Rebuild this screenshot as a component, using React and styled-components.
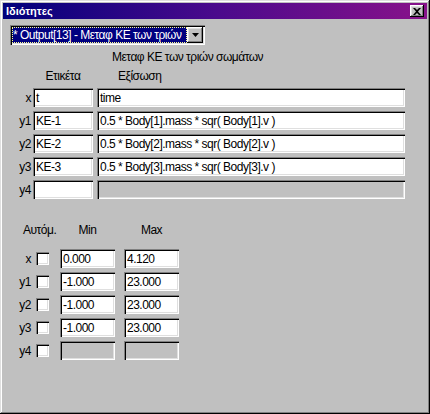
import React from 'react';
import styled, { createGlobalStyle } from 'styled-components';

const GlobalStyle = createGlobalStyle`
  html, body {
    margin: 0;
    padding: 0;
    background: #c0c0c0;
  }

  body {
    font-family: "Liberation Sans", Arial, sans-serif;
    font-size: 12px;
    letter-spacing: -0.5px;
    color: #000;
  }
`;

const sunken = 'inset 1px 1px #808080, inset 2px 2px #000, inset -1px -1px #fff, inset -2px -2px #dfdfdf';
const raised = 'inset -1px -1px #000, inset 1px 1px #fff, inset -2px -2px #808080, inset 2px 2px #dfdfdf';

const StyledWindow = styled.div`
  box-sizing: border-box;
  width: 430px;
  height: 414px;
  padding: 3px;
  display: flex;
  flex-direction: column;
  background: #c0c0c0;
  box-shadow: inset -1px -1px #000, inset 1px 1px #dfdfdf, inset -2px -2px #808080, inset 2px 2px #fff;
`;

const StyledTitleBar = styled.div`
  height: 16px;
  display: flex;
  align-items: center;
  justify-content: space-between;
  padding: 0 3px;
  background: linear-gradient(90deg, #00007b 0%, #4a0a8c 50%, #88128a 100%);
`;

const StyledTitle = styled.span`
  font-size: 11px;
  font-weight: bold;
  letter-spacing: 0;
  color: #fff;
`;

const StyledClose = styled.button`
  width: 14px;
  height: 12px;
  padding: 0;
  border: 0;
  display: flex;
  align-items: center;
  justify-content: center;
  background: #c0c0c0;
  box-shadow: ${raised};
`;

const StyledContent = styled.div`
  padding: 6px 0 0 3px;
  display: flex;
  flex-direction: column;
`;

const StyledCombo = styled.div`
  box-sizing: border-box;
  width: 195px;
  height: 20px;
  margin-left: 4px;
  padding: 2px;
  display: flex;
  background: #fff;
  box-shadow: ${sunken};
`;

const StyledComboValue = styled.div`
  flex: 1;
  min-width: 0;
  padding-left: 1px;
  overflow: hidden;
  white-space: nowrap;
  line-height: 16px;
  color: #fff;
  background: #000080;
  outline: 1px dotted #ffff90;
  outline-offset: -1px;
`;

const StyledComboArrow = styled.div`
  width: 16px;
  display: flex;
  align-items: center;
  justify-content: center;
  background: #c0c0c0;
  box-shadow: ${raised};
`;

const StyledCaption = styled.div`
  margin: 5px 0 0 106px;
  line-height: 14px;
`;

const StyledFormGrid = styled.div`
  display: grid;
  grid-template-columns: ${({ $columns }) => $columns};
  grid-auto-rows: 19px;
  row-gap: 4px;
  align-items: center;
  margin-top: ${({ $top }) => $top}px;
`;

const StyledHeadRow = styled.div`
  display: grid;
  grid-template-columns: ${({ $columns }) => $columns};
  line-height: 14px;
  margin-top: ${({ $top }) => $top}px;
`;

const StyledHead = styled.span`
  grid-column: ${({ $span }) => $span || 'auto'};
  width: ${({ $width }) => ($width ? `${$width}px` : 'auto')};
  padding-left: ${({ $indent }) => $indent || 0}px;
  text-align: ${({ $align }) => $align || 'left'};
`;

const StyledLabel = styled.span`
  text-align: right;
  padding-right: ${({ $pad }) => $pad}px;
  line-height: 14px;
`;

const StyledInput = styled.div`
  box-sizing: border-box;
  width: ${({ $width }) => $width}px;
  height: 19px;
  padding: 2px 3px 0;
  line-height: 16px;
  white-space: nowrap;
  overflow: hidden;
  background: ${({ $disabled }) => ($disabled ? '#c0c0c0' : '#fff')};
  box-shadow: ${sunken};
`;

const StyledCheck = styled.span`
  width: 13px;
  height: 13px;
  background: #fff;
  box-shadow: ${sunken};
`;

const equationColumns = '27px 64px 308px';
const rangeColumns = '30px 24px 64px 55px';

const equations = [
  { axis: 'x', label: 't', formula: 'time' },
  { axis: 'y1', label: 'KE-1', formula: '0.5 * Body[1].mass * sqr( Body[1].v )' },
  { axis: 'y2', label: 'KE-2', formula: '0.5 * Body[2].mass * sqr( Body[2].v )' },
  { axis: 'y3', label: 'KE-3', formula: '0.5 * Body[3].mass * sqr( Body[3].v )' },
  { axis: 'y4', label: '', formula: null },
];

const ranges = [
  { axis: 'x', min: '0.000', max: '4.120' },
  { axis: 'y1', min: '-1.000', max: '23.000' },
  { axis: 'y2', min: '-1.000', max: '23.000' },
  { axis: 'y3', min: '-1.000', max: '23.000' },
  { axis: 'y4', min: null, max: null },
];

function App() {
  return (
    <StyledWindow>
      <GlobalStyle />

      <StyledTitleBar>
        <StyledTitle>Ιδιότητες</StyledTitle>
        <StyledClose aria-label="close">
          <svg width="8" height="7" viewBox="0 0 8 7">
            <path d="M0 0h2l2 2 2-2h2L5 3.5 8 7H6L4 5 2 7H0l3-3.5z" fill="#000" />
          </svg>
        </StyledClose>
      </StyledTitleBar>

      <StyledContent>
        <StyledCombo>
          <StyledComboValue>* Output[13] - Μεταφ ΚΕ των τριών</StyledComboValue>
          <StyledComboArrow>
            <svg width="7" height="4" viewBox="0 0 7 4">
              <path d="M0 0h7L3.5 4z" fill="#000" />
            </svg>
          </StyledComboArrow>
        </StyledCombo>

        <StyledCaption>Μεταφ ΚΕ των τριών σωμάτων</StyledCaption>

        <StyledHeadRow $columns={equationColumns} $top={5}>
          <span />
          <StyledHead $width={60} $align="center">Ετικέτα</StyledHead>
          <StyledHead $indent={21}>Εξίσωση</StyledHead>
        </StyledHeadRow>

        <StyledFormGrid $columns={equationColumns} $top={5}>
          {equations.map((row) => (
            <React.Fragment key={row.axis}>
              <StyledLabel $pad={2}>{row.axis}</StyledLabel>
              <StyledInput $width={60}>{row.label}</StyledInput>
              <StyledInput $width={308} $disabled={row.formula === null}>{row.formula}</StyledInput>
            </React.Fragment>
          ))}
        </StyledFormGrid>

        <StyledHeadRow $columns={rangeColumns} $top={24}>
          <StyledHead $span="1 / 3" $indent={17}>Αυτόμ.</StyledHead>
          <StyledHead $width={55} $align="center">Min</StyledHead>
          <StyledHead $width={55} $align="center">Max</StyledHead>
        </StyledHeadRow>

        <StyledFormGrid $columns={rangeColumns} $top={12}>
          {ranges.map((row) => (
            <React.Fragment key={row.axis}>
              <StyledLabel $pad={5}>{row.axis}</StyledLabel>
              <StyledCheck />
              <StyledInput $width={55} $disabled={row.min === null}>{row.min}</StyledInput>
              <StyledInput $width={55} $disabled={row.max === null}>{row.max}</StyledInput>
            </React.Fragment>
          ))}
        </StyledFormGrid>
      </StyledContent>
    </StyledWindow>
  );
}

export default App;
